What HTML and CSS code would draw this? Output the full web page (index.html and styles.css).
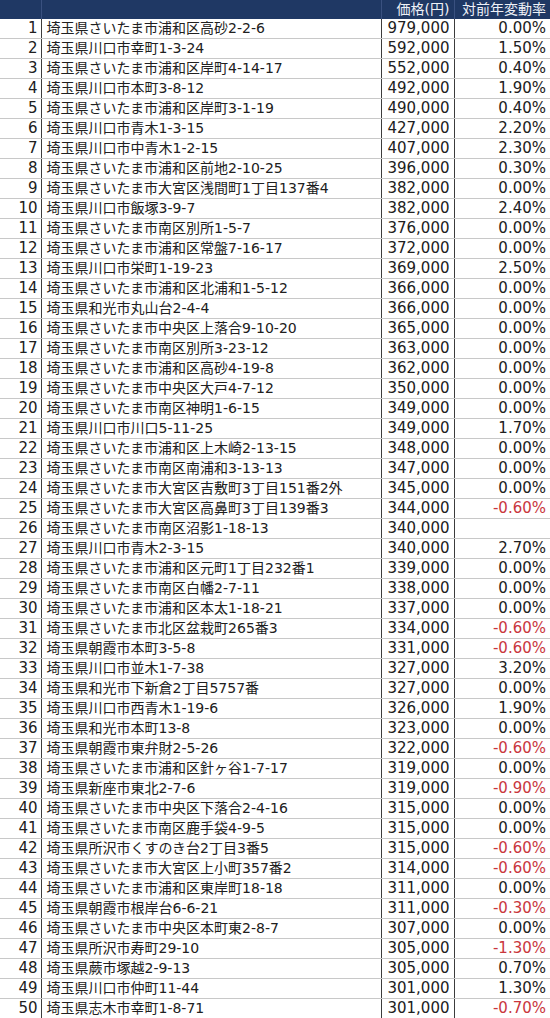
FILE: index.html
```html
<!DOCTYPE html>
<html lang="ja">
<head>
<meta charset="utf-8">
<link rel="stylesheet" href="styles.css">
</head>
<body>
<table class="land">
<colgroup><col class="c-no"><col class="c-addr"><col class="c-price"><col class="c-rate"></colgroup>
<thead>
<tr><th></th><th></th><th class="num">価格(円)</th><th class="num">対前年変動率</th></tr>
</thead>
<tbody>
<tr><td class="num">1</td><td class="addr">埼玉県さいたま市浦和区高砂2-2-6</td><td class="num">979,000</td><td class="num">0.00%</td></tr>
<tr><td class="num">2</td><td class="addr">埼玉県川口市幸町1-3-24</td><td class="num">592,000</td><td class="num">1.50%</td></tr>
<tr><td class="num">3</td><td class="addr">埼玉県さいたま市浦和区岸町4-14-17</td><td class="num">552,000</td><td class="num">0.40%</td></tr>
<tr><td class="num">4</td><td class="addr">埼玉県川口市本町3-8-12</td><td class="num">492,000</td><td class="num">1.90%</td></tr>
<tr><td class="num">5</td><td class="addr">埼玉県さいたま市浦和区岸町3-1-19</td><td class="num">490,000</td><td class="num">0.40%</td></tr>
<tr><td class="num">6</td><td class="addr">埼玉県川口市青木1-3-15</td><td class="num">427,000</td><td class="num">2.20%</td></tr>
<tr><td class="num">7</td><td class="addr">埼玉県川口市中青木1-2-15</td><td class="num">407,000</td><td class="num">2.30%</td></tr>
<tr><td class="num">8</td><td class="addr">埼玉県さいたま市浦和区前地2-10-25</td><td class="num">396,000</td><td class="num">0.30%</td></tr>
<tr><td class="num">9</td><td class="addr">埼玉県さいたま市大宮区浅間町1丁目137番4</td><td class="num">382,000</td><td class="num">0.00%</td></tr>
<tr><td class="num">10</td><td class="addr">埼玉県川口市飯塚3-9-7</td><td class="num">382,000</td><td class="num">2.40%</td></tr>
<tr><td class="num">11</td><td class="addr">埼玉県さいたま市南区別所1-5-7</td><td class="num">376,000</td><td class="num">0.00%</td></tr>
<tr><td class="num">12</td><td class="addr">埼玉県さいたま市浦和区常盤7-16-17</td><td class="num">372,000</td><td class="num">0.00%</td></tr>
<tr><td class="num">13</td><td class="addr">埼玉県川口市栄町1-19-23</td><td class="num">369,000</td><td class="num">2.50%</td></tr>
<tr><td class="num">14</td><td class="addr">埼玉県さいたま市浦和区北浦和1-5-12</td><td class="num">366,000</td><td class="num">0.00%</td></tr>
<tr><td class="num">15</td><td class="addr">埼玉県和光市丸山台2-4-4</td><td class="num">366,000</td><td class="num">0.00%</td></tr>
<tr><td class="num">16</td><td class="addr">埼玉県さいたま市中央区上落合9-10-20</td><td class="num">365,000</td><td class="num">0.00%</td></tr>
<tr><td class="num">17</td><td class="addr">埼玉県さいたま市南区別所3-23-12</td><td class="num">363,000</td><td class="num">0.00%</td></tr>
<tr><td class="num">18</td><td class="addr">埼玉県さいたま市浦和区高砂4-19-8</td><td class="num">362,000</td><td class="num">0.00%</td></tr>
<tr><td class="num">19</td><td class="addr">埼玉県さいたま市中央区大戸4-7-12</td><td class="num">350,000</td><td class="num">0.00%</td></tr>
<tr><td class="num">20</td><td class="addr">埼玉県さいたま市南区神明1-6-15</td><td class="num">349,000</td><td class="num">0.00%</td></tr>
<tr><td class="num">21</td><td class="addr">埼玉県川口市川口5-11-25</td><td class="num">349,000</td><td class="num">1.70%</td></tr>
<tr><td class="num">22</td><td class="addr">埼玉県さいたま市浦和区上木崎2-13-15</td><td class="num">348,000</td><td class="num">0.00%</td></tr>
<tr><td class="num">23</td><td class="addr">埼玉県さいたま市南区南浦和3-13-13</td><td class="num">347,000</td><td class="num">0.00%</td></tr>
<tr><td class="num">24</td><td class="addr">埼玉県さいたま市大宮区吉敷町3丁目151番2外</td><td class="num">345,000</td><td class="num">0.00%</td></tr>
<tr><td class="num">25</td><td class="addr">埼玉県さいたま市大宮区高鼻町3丁目139番3</td><td class="num">344,000</td><td class="num neg">-0.60%</td></tr>
<tr><td class="num">26</td><td class="addr">埼玉県さいたま市南区沼影1-18-13</td><td class="num">340,000</td><td class="num"></td></tr>
<tr><td class="num">27</td><td class="addr">埼玉県川口市青木2-3-15</td><td class="num">340,000</td><td class="num">2.70%</td></tr>
<tr><td class="num">28</td><td class="addr">埼玉県さいたま市浦和区元町1丁目232番1</td><td class="num">339,000</td><td class="num">0.00%</td></tr>
<tr><td class="num">29</td><td class="addr">埼玉県さいたま市南区白幡2-7-11</td><td class="num">338,000</td><td class="num">0.00%</td></tr>
<tr><td class="num">30</td><td class="addr">埼玉県さいたま市浦和区本太1-18-21</td><td class="num">337,000</td><td class="num">0.00%</td></tr>
<tr><td class="num">31</td><td class="addr">埼玉県さいたま市北区盆栽町265番3</td><td class="num">334,000</td><td class="num neg">-0.60%</td></tr>
<tr><td class="num">32</td><td class="addr">埼玉県朝霞市本町3-5-8</td><td class="num">331,000</td><td class="num neg">-0.60%</td></tr>
<tr><td class="num">33</td><td class="addr">埼玉県川口市並木1-7-38</td><td class="num">327,000</td><td class="num">3.20%</td></tr>
<tr><td class="num">34</td><td class="addr">埼玉県和光市下新倉2丁目5757番</td><td class="num">327,000</td><td class="num">0.00%</td></tr>
<tr><td class="num">35</td><td class="addr">埼玉県川口市西青木1-19-6</td><td class="num">326,000</td><td class="num">1.90%</td></tr>
<tr><td class="num">36</td><td class="addr">埼玉県和光市本町13-8</td><td class="num">323,000</td><td class="num">0.00%</td></tr>
<tr><td class="num">37</td><td class="addr">埼玉県朝霞市東弁財2-5-26</td><td class="num">322,000</td><td class="num neg">-0.60%</td></tr>
<tr><td class="num">38</td><td class="addr">埼玉県さいたま市浦和区針ヶ谷1-7-17</td><td class="num">319,000</td><td class="num">0.00%</td></tr>
<tr><td class="num">39</td><td class="addr">埼玉県新座市東北2-7-6</td><td class="num">319,000</td><td class="num neg">-0.90%</td></tr>
<tr><td class="num">40</td><td class="addr">埼玉県さいたま市中央区下落合2-4-16</td><td class="num">315,000</td><td class="num">0.00%</td></tr>
<tr><td class="num">41</td><td class="addr">埼玉県さいたま市南区鹿手袋4-9-5</td><td class="num">315,000</td><td class="num">0.00%</td></tr>
<tr><td class="num">42</td><td class="addr">埼玉県所沢市くすのき台2丁目3番5</td><td class="num">315,000</td><td class="num neg">-0.60%</td></tr>
<tr><td class="num">43</td><td class="addr">埼玉県さいたま市大宮区上小町357番2</td><td class="num">314,000</td><td class="num neg">-0.60%</td></tr>
<tr><td class="num">44</td><td class="addr">埼玉県さいたま市浦和区東岸町18-18</td><td class="num">311,000</td><td class="num">0.00%</td></tr>
<tr><td class="num">45</td><td class="addr">埼玉県朝霞市根岸台6-6-21</td><td class="num">311,000</td><td class="num neg">-0.30%</td></tr>
<tr><td class="num">46</td><td class="addr">埼玉県さいたま市中央区本町東2-8-7</td><td class="num">307,000</td><td class="num">0.00%</td></tr>
<tr><td class="num">47</td><td class="addr">埼玉県所沢市寿町29-10</td><td class="num">305,000</td><td class="num neg">-1.30%</td></tr>
<tr><td class="num">48</td><td class="addr">埼玉県蕨市塚越2-9-13</td><td class="num">305,000</td><td class="num">0.70%</td></tr>
<tr><td class="num">49</td><td class="addr">埼玉県川口市仲町11-44</td><td class="num">301,000</td><td class="num">1.30%</td></tr>
<tr><td class="num">50</td><td class="addr">埼玉県志木市幸町1-8-71</td><td class="num">301,000</td><td class="num neg">-0.70%</td></tr>
</tbody>
</table>
</body>
</html>
```
FILE: styles.css
```css
html, body {
  margin: 0;
  padding: 0;
  background: #ffffff;
}
.land {
  width: 550px;
  border-collapse: collapse;
  table-layout: fixed;
  font-family: "DejaVu Sans", "Noto Sans CJK JP", sans-serif;
  font-size: 15px;
  color: #202020;
}
.c-no { width: 41px; }
.c-addr { width: 340px; }
.c-price { width: 73px; }
.c-rate { width: 96px; }
.land th {
  background: #1f3864;
  color: #eef1f7;
  font-size: 14px;
  font-weight: normal;
  height: 19px;
  padding: 0 4px;
  line-height: 19px;
  white-space: nowrap;
  overflow: visible;
  border-right: 1px solid #3a5180;
}
.land th:last-child { border-right: none; }
.land td {
  height: 19px;
  padding: 0 4px;
  line-height: 19px;
  white-space: nowrap;
  overflow: visible;
  border-bottom: 1px solid #c8c8c8;
  border-right: 1px solid #3c3c3c;
}
.land td:last-child { border-right: none; }
.land td:first-child { padding-right: 3px; }
.land td.addr {
  font-size: 14px;
  padding-left: 5px;
}
.num { text-align: right; }
.neg { color: #c9363d; }
```
